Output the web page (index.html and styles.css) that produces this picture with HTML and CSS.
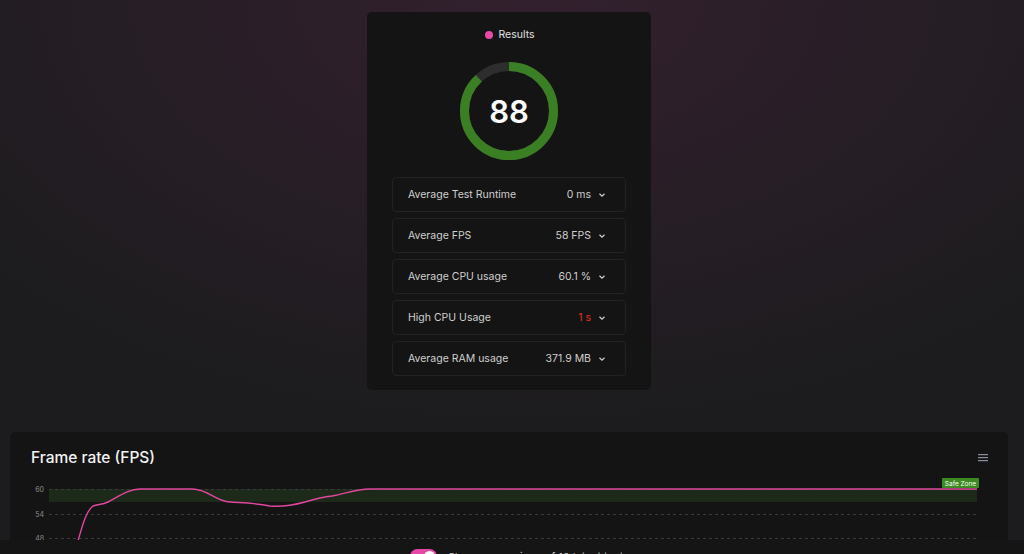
FILE: index.html
```html
<html>

<head>
    <title>Test Results</title>
    <link rel="stylesheet" href="styles.css">
</head>

<body>
    <div id="page">
        <div class="results-card">
            <div class="results-heading">
                <span class="dot"></span>
                <span>Results</span>
            </div>
            <div class="score">
                <svg width="100" height="100" viewBox="0 0 100 100">
                    <circle cx="50" cy="50" r="44.5" fill="none" stroke="#2d2d2d" stroke-width="9"></circle>
                    <circle cx="50" cy="50" r="44.5" fill="none" stroke="#3b7f24" stroke-width="9"
                        stroke-dasharray="246 280" transform="rotate(-90 50 50)"></circle>
                </svg>
                <div class="score-value">88</div>
            </div>
            <div class="metrics">
                <div class="metric">
                    <span class="metric-label">Average Test Runtime</span>
                    <span class="metric-value">0 ms</span>
                    <svg class="chevron" width="8" height="8" viewBox="0 0 8 8"><path d="M1.5 2.8 L4 5.2 L6.5 2.8" /></svg>
                </div>
                <div class="metric">
                    <span class="metric-label">Average FPS</span>
                    <span class="metric-value">58 FPS</span>
                    <svg class="chevron" width="8" height="8" viewBox="0 0 8 8"><path d="M1.5 2.8 L4 5.2 L6.5 2.8" /></svg>
                </div>
                <div class="metric">
                    <span class="metric-label">Average CPU usage</span>
                    <span class="metric-value">60.1 %</span>
                    <svg class="chevron" width="8" height="8" viewBox="0 0 8 8"><path d="M1.5 2.8 L4 5.2 L6.5 2.8" /></svg>
                </div>
                <div class="metric">
                    <span class="metric-label">High CPU Usage</span>
                    <span class="metric-value bad">1 s</span>
                    <svg class="chevron" width="8" height="8" viewBox="0 0 8 8"><path d="M1.5 2.8 L4 5.2 L6.5 2.8" /></svg>
                </div>
                <div class="metric">
                    <span class="metric-label">Average RAM usage</span>
                    <span class="metric-value">371.9 MB</span>
                    <svg class="chevron" width="8" height="8" viewBox="0 0 8 8"><path d="M1.5 2.8 L4 5.2 L6.5 2.8" /></svg>
                </div>
            </div>
        </div>

        <div class="chart-card">
            <div class="chart-head">
                <h2>Frame rate (FPS)</h2>
                <svg class="menu" width="12" height="9" viewBox="0 0 12 9">
                    <rect x="1" y="1" width="10" height="1.2"></rect>
                    <rect x="1" y="4" width="10" height="1.2"></rect>
                    <rect x="1" y="7" width="10" height="1.2"></rect>
                </svg>
            </div>
            <svg class="plot" width="998" height="90" viewBox="0 0 998 90">
                <rect x="39" y="14" width="928" height="13" fill="#1d2a19"></rect>
                <g stroke="#3a3a3a" stroke-width="1" stroke-dasharray="3 3">
                    <line x1="39" y1="14.5" x2="967" y2="14.5"></line>
                    <line x1="39" y1="39.5" x2="967" y2="39.5"></line>
                    <line x1="39" y1="63.5" x2="967" y2="63.5"></line>
                    <line x1="39" y1="88.5" x2="967" y2="88.5"></line>
                </g>
                <g class="axis-label" text-anchor="end">
                    <text x="34" y="17">60</text>
                    <text x="34" y="42">54</text>
                    <text x="34" y="66">48</text>
                </g>
                <path d="M68,66 C72,52 76,36 83,31 C88,29 92,30 98,27 C108,22 118,14 130,14 L182,14 C198,14 205,26 220,27 C235,28 245,28 260,31 C270,32 280,31 295,27 C305,24 312,22 322,21 C335,19 345,14 360,14 L967,14"
                    fill="none" stroke="#e0479e" stroke-width="1.4"></path>
                <rect x="932" y="3" width="37" height="10" rx="1" fill="#3c8a22"></rect>
                <text class="zone-label" x="950.5" y="10.5" text-anchor="middle">Safe Zone</text>
            </svg>
        </div>
    </div>

    <div class="bottom-bar">
        <span class="toggle"><span class="knob"></span></span>
        <span class="bottom-text">Show comparison of 10 latest tests</span>
    </div>
</body>

</html>
```

FILE: styles.css
```css
body {
    margin: 0;
    font-family: Inter, 'Liberation Sans', sans-serif;
    background: #1c1c1e radial-gradient(ellipse 720px 430px at 52% 0, #33202e, #1c1c1e);
    color: #dcdcdc;
    overflow: hidden;
    height: 554px;
}

#page {
    padding: 12px 16px 0 10px;
    display: flex;
    flex-direction: column;
    align-items: center;
}

.results-card {
    width: 284px;
    box-sizing: border-box;
    background: #141414;
    border-radius: 5px;
    padding: 16px 25px 14px 25px;
    display: flex;
    flex-direction: column;
    align-items: center;
}

.results-heading {
    display: flex;
    align-items: center;
    gap: 5px;
    font-size: 10.5px;
    color: #e0e0e0;
    height: 13px;
    padding-left: 2px;
}

.dot {
    width: 8px;
    height: 8px;
    border-radius: 50%;
    background: #e74aa6;
}

.score {
    margin-top: 20px;
    width: 100px;
    height: 100px;
    display: grid;
    place-items: center;
}

.score svg,
.score-value {
    grid-area: 1 / 1;
}

.score-value {
    font-size: 31px;
    font-weight: 600;
    color: #ffffff;
}

.metrics {
    margin-top: 16px;
    width: 100%;
    display: flex;
    flex-direction: column;
    gap: 6px;
}

.metric {
    height: 35px;
    box-sizing: border-box;
    border: 1px solid #222224;
    border-radius: 4px;
    display: flex;
    align-items: center;
    padding: 0 19px 0 15px;
    font-size: 10.5px;
    color: #cfcfcf;
}

.metric-label {
    flex: 1;
}

.metric-value {
    margin-right: 7px;
}

.metric-value.bad {
    color: #e3321f;
}

.chevron path {
    fill: none;
    stroke: #d0d0d0;
    stroke-width: 1.2;
}

.chart-card {
    margin-top: 42px;
    width: 100%;
    height: 160px;
    background: #141414;
    border-radius: 5px;
}

.chart-head {
    display: flex;
    align-items: center;
    justify-content: space-between;
    padding: 16px 19px 0 21px;
}

.chart-head h2 {
    margin: 0;
    font-size: 15.5px;
    font-weight: 500;
    color: #f2f2f2;
}

.menu rect {
    fill: #8a909a;
}

.plot {
    display: block;
    margin-top: 8px;
}

.axis-label {
    font-size: 7px;
    fill: #8c8c8c;
}

.zone-label {
    font-size: 6.5px;
    fill: #ffffff;
}

.bottom-bar {
    position: fixed;
    left: 0;
    right: 0;
    bottom: 0;
    height: 14px;
    background: #151515;
    display: flex;
    align-items: flex-start;
    padding: 9px 0 0 410px;
    box-sizing: border-box;
    overflow: hidden;
    gap: 11px;
}

.toggle {
    width: 27px;
    height: 15px;
    border-radius: 8px;
    background: #e74aa6;
    display: flex;
    justify-content: flex-end;
    padding: 2px;
    box-sizing: border-box;
}

.knob {
    width: 11px;
    height: 11px;
    border-radius: 50%;
    background: #ffffff;
}

.bottom-text {
    font-size: 11px;
    color: #bdbdbd;
    margin-top: 1px;
}
```
